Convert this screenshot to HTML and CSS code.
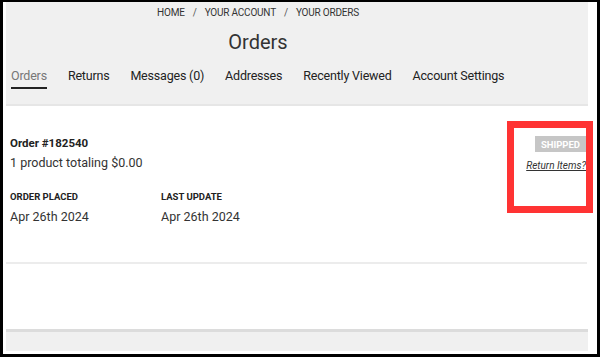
FILE: index.html
```html
<!DOCTYPE html>
<html lang="en">
<head>
    <meta charset="UTF-8">
    <meta name="viewport" content="width=device-width, initial-scale=1.0">
    <title>Your Orders</title>
    <link rel="stylesheet" href="styles.css">
</head>
<body>
    <div class="frame">
        <div class="header">
            <div class="header-top">
                <div class="breadcrumb">
                    <a href="#">HOME</a><span class="sep">/</span><a href="#">YOUR ACCOUNT</a><span class="sep">/</span><a href="#">YOUR ORDERS</a>
                </div>
                <h1>Orders</h1>
            </div>
            <ul class="tabs">
                <li class="active">Orders</li>
                <li>Returns</li>
                <li>Messages (0)</li>
                <li>Addresses</li>
                <li>Recently Viewed</li>
                <li>Account Settings</li>
            </ul>
        </div>

        <div class="order">
            <div class="order-info">
                <div class="order-number">Order #182540</div>
                <div class="order-total">1 product totaling $0.00</div>
                <div class="order-dates">
                    <div class="date-col">
                        <div class="label">ORDER PLACED</div>
                        <div class="value">Apr 26th 2024</div>
                    </div>
                    <div class="date-col">
                        <div class="label">LAST UPDATE</div>
                        <div class="value">Apr 26th 2024</div>
                    </div>
                </div>
            </div>
            <div class="order-status">
                <span class="badge">SHIPPED</span>
                <a href="#" class="return-link">Return Items?</a>
            </div>
            <div class="highlight"></div>
        </div>

        <div class="footer-band"></div>
    </div>
</body>
</html>
```

FILE: styles.css
```css
html, body {
    margin: 0;
    background-color: #000;
}

body {
    font-family: Roboto, "Liberation Sans", sans-serif;
    color: #222;
}

.frame {
    position: relative;
    box-sizing: border-box;
    height: 352px;
    margin: 2px 3px 3px 3px;
    padding: 0 9px 0 3px;
    background-color: #fff;
    display: flex;
    flex-direction: column;
}

.header {
    background-color: #f0f0f0;
    height: 102px;
    border-bottom: 2px solid #e6e6e6;
}

.header-top {
    margin-right: 78px;
    text-align: center;
}

.breadcrumb {
    padding-top: 4px;
    font-size: 10px;
    line-height: 14px;
    letter-spacing: -0.2px;
}

.breadcrumb a {
    color: #333;
    text-decoration: none;
}

.breadcrumb .sep {
    margin: 0 8px;
    color: #555;
}

h1 {
    margin: 10px 0 0;
    font-size: 20px;
    line-height: 24px;
    font-weight: 400;
    color: #333;
}

.tabs {
    list-style: none;
    margin: 14px 0 0;
    padding: 0 0 0 5px;
    display: flex;
    gap: 21px;
    font-size: 12.5px;
    letter-spacing: -0.2px;
}

.tabs li {
    padding-bottom: 4px;
    border-bottom: 2px solid transparent;
}

.tabs li.active {
    color: #777;
    border-bottom-color: #222;
}

.order {
    position: relative;
    display: flex;
    justify-content: space-between;
    padding: 30px 1px 24px 4px;
    border-bottom: 2px solid #ececec;
    height: 158px;
    box-sizing: border-box;
    margin-right: 1px;
}

.order-number {
    font-size: 11.5px;
    font-weight: 700;
    line-height: 14px;
    color: #222;
}

.order-total {
    margin-top: 5px;
    font-size: 12.5px;
    line-height: 16px;
    color: #333;
}

.order-dates {
    display: flex;
    margin-top: 20px;
}

.date-col {
    width: 151px;
}

.label {
    font-size: 9.5px;
    font-weight: 700;
    line-height: 12px;
    color: #222;
}

.value {
    margin-top: 6px;
    font-size: 12.5px;
    line-height: 16px;
    color: #333;
}

.order-status {
    display: flex;
    flex-direction: column;
    align-items: flex-end;
    gap: 8px;
}

.badge {
    background-color: #c6c6c6;
    color: #fff;
    font-size: 9.5px;
    font-weight: 700;
    padding: 3px 6px 2px;
    line-height: 11px;
}

.return-link {
    font-size: 10px;
    font-style: italic;
    color: #333;
}

.highlight {
    position: absolute;
    left: 501px;
    top: 15px;
    width: 72px;
    height: 78px;
    border: 7px solid #ff3333;
}

.footer-band {
    margin-top: auto;
    margin-bottom: 3px;
    height: 19px;
    background-color: #f0f0f0;
    border-top: 3px solid #dcdcdc;
}
```
